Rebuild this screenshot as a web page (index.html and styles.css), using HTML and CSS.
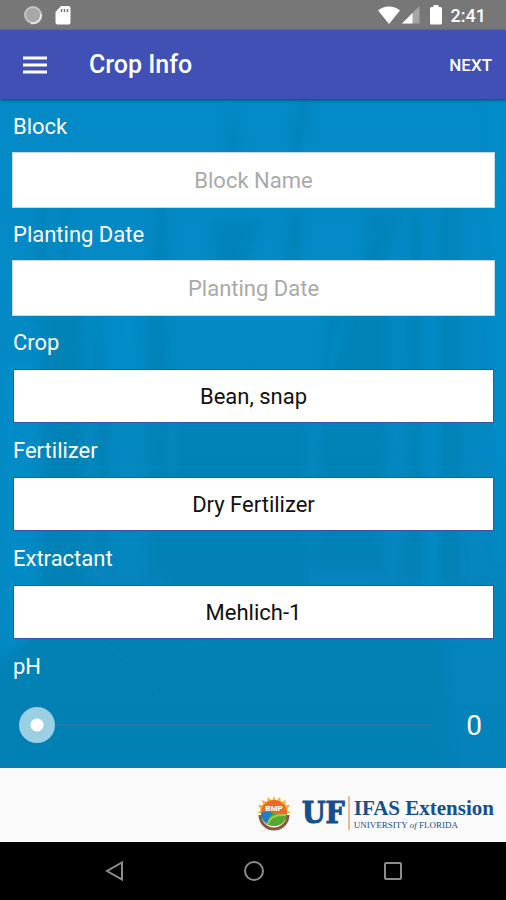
FILE: index.html
```html
<!DOCTYPE html>
<html lang="en">
<head>
    <meta charset="UTF-8">
    <meta name="viewport" content="width=device-width, initial-scale=1.0">
    <title>Crop Info</title>
    <link rel="stylesheet" href="styles.css">
</head>
<body>
    <div class="status-bar">
        <div class="status-left">
            <svg width="20" height="20" viewBox="0 0 20 20">
                <circle cx="10" cy="10" r="8" fill="#a8a8a8" stroke="#c4c4c4" stroke-width="2"/>
                <path d="M18 9a8 8 0 0 1-10 9" fill="none" stroke="#e4e4e4" stroke-width="2"/>
            </svg>
            <svg width="16" height="20" viewBox="0 0 16 20">
                <path d="M6 1h7.500a2 2 0 0 1 2 2v14.500a2 2 0 0 1-2 2h-11a2 2 0 0 1-2-2V7z" fill="#fff"/>
                <path d="M6.500 4v3M9.500 4v3M12.500 4v3" stroke="#777" stroke-width="1.500"/>
            </svg>
        </div>
        <div class="status-right">
            <svg width="22" height="18" viewBox="0 0 22 18">
                <path d="M0 4.500C6-1 16-1 22 4.500L11 18z" fill="#fff"/>
            </svg>
            <svg width="18" height="18" viewBox="0 0 18 18">
                <path d="M17.500 0v17.500H0z" fill="#a6a6a6"/>
                <path d="M10.500 7v10.500H0z" fill="#fff"/>
            </svg>
            <svg class="battery" width="12" height="20" viewBox="0 0 12 20">
                <path d="M3.500 0h5v2H10.500a1.500 1.500 0 0 1 1.500 1.500v14.500a1.500 1.500 0 0 1-1.500 1.500h-9A1.500 1.500 0 0 1 0 18V3.500A1.500 1.500 0 0 1 1.500 2h2z" fill="#fff"/>
            </svg>
            <span class="time">2:41</span>
        </div>
    </div>

    <header class="toolbar">
        <button type="button" class="menu-button" aria-label="Menu">
            <svg width="24" height="18" viewBox="0 0 24 18">
                <path d="M0 2h24M0 9h24M0 16h24" stroke="#fff" stroke-width="3"/>
            </svg>
        </button>
        <h1>Crop Info</h1>
        <button type="button" class="next-button">NEXT</button>
    </header>

    <main>
        <!-- faint plant texture behind the form -->
        <svg class="backdrop" viewBox="0 0 506 668" preserveAspectRatio="none" aria-hidden="true">
            <defs>
                <filter id="soft"><feGaussianBlur stdDeviation="4"/></filter>
            </defs>
            <g filter="url(#soft)" fill="#067fae" opacity=".5">
                <path d="M232 0l12 60h-18zM298 0h14l-14 70h-12zM36 60h12v160h-14zM60 100h10v150h-10z"/>
                <path d="M155 100l14-8-4 140h-14zM212 120h50l-20 50h-24zM366 110h38l-20 60h-22z"/>
                <path d="M42 180h40l8 380h-50zM98 170h12v300h-16zM148 180h18l6 300h-24z"/>
                <path d="M290 110h14l-6 60h-14zM330 170h62l-10 300h-70zM410 110h12v370h-16zM440 100h20v380h-20z"/>
                <path d="M180 280h130v260h-150zM0 570l60-60h380l10 160H0z"/>
            </g>
            <g filter="url(#soft)" fill="#0590cd" opacity=".5">
                <path d="M100 180l30-10 14 130h-40zM328 260l18-60 8 0-22 80zM428 170h8v340h-8zM444 510l8-4 12 30-8 6z"/>
                <path d="M0 260h38v270l-38 30zM488 0h18v460h-10z"/>
            </g>
            <path d="M80 530q60 30 80 70M170 550q120-20 210-50" fill="none" stroke="#2a95c6" opacity=".2"/>
        </svg>
        <form class="crop-form">
            <div class="field">
                <label for="blockName">Block</label>
                <input type="text" id="blockName" name="blockName" placeholder="Block Name">
            </div>
            <div class="field">
                <label for="plantingDate">Planting Date</label>
                <input type="text" id="plantingDate" name="plantingDate" placeholder="Planting Date">
            </div>
            <div class="field">
                <label for="crop">Crop</label>
                <select id="crop" name="crop">
                    <option>Bean, snap</option>
                </select>
            </div>
            <div class="field">
                <label for="fertilizer">Fertilizer</label>
                <select id="fertilizer" name="fertilizer">
                    <option>Dry Fertilizer</option>
                </select>
            </div>
            <div class="field">
                <label for="extractant">Extractant</label>
                <select id="extractant" name="extractant">
                    <option>Mehlich-1</option>
                </select>
            </div>
            <div class="field">
                <label for="ph">pH</label>
                <div class="slider-row">
                    <input type="range" id="ph" name="ph" min="0" max="14" value="0">
                    <output for="ph">0</output>
                </div>
            </div>
        </form>
    </main>

    <footer>
        <svg class="bmp-logo" width="36" height="36" viewBox="0 0 36 36">
            <path d="M18 1l2 5 4-4 1 5 5-2-1 5 5 0-3 5 4 3H1l4-3-3-5 5 0-1-5 5 2 1-5 4 4z" fill="#f9b233"/>
            <circle cx="18" cy="18" r="13" fill="#ee6a24"/>
            <path d="M5 18q7-4 13 0t13 0a13 13 0 0 1-26 0z" fill="#54a934"/>
            <path d="M5 18q8-4 12 1-6 3-3 11A13 13 0 0 1 5 18z" fill="#2080c4"/>
            <path d="M12 29q2-10 18-9" fill="none" stroke="#9bcf4a" stroke-width="2"/>
            <path d="M4 20a14 14 0 0 0 28 0" fill="none" stroke="#8b5a3c" stroke-width="3"/>
            <text x="18" y="16" class="bmp-text">BMP</text>
        </svg>
        <span class="uf">UF</span>
        <div class="ifas">
            <span class="ifas-name">IFAS Extension</span>
            <span class="ifas-sub">UNIVERSITY <i>of</i> FLORIDA</span>
        </div>
    </footer>

    <nav class="nav-bar">
        <button type="button" aria-label="Back">
            <svg width="20" height="20" viewBox="0 0 20 20">
                <path d="M17 1.500v17L2 10z"/>
            </svg>
        </button>
        <button type="button" aria-label="Home">
            <svg width="20" height="20" viewBox="0 0 20 20">
                <circle cx="10" cy="10" r="9"/>
            </svg>
        </button>
        <button type="button" aria-label="Recent apps">
            <svg width="20" height="20" viewBox="0 0 20 20">
                <rect x="2" y="2" width="16" height="16" rx="1"/>
            </svg>
        </button>
    </nav>

    <script>
        const ph = document.getElementById('ph');
        ph.addEventListener('input', () => {
            document.querySelector('output').value = ph.value;
        });
    </script>
</body>
</html>
```
FILE: styles.css
```css
* {
    box-sizing: border-box;
}
body {
    font-family: Roboto, "Liberation Sans", sans-serif;
    margin: 0;
    min-height: 100vh;
    display: flex;
    flex-direction: column;
    background-color: #fafafa;
}
button {
    border: none;
    padding: 0;
    background: none;
    color: white;
    font-family: inherit;
    cursor: pointer;
}
svg {
    display: block;
}

.status-bar {
    height: 30px;
    padding: 0 20px 0 23px;
    display: flex;
    justify-content: space-between;
    align-items: center;
    background-color: #777;
    color: white;
}
.status-left,
.status-right {
    display: flex;
    align-items: center;
}
.status-left {
    gap: 12px;
}
.status-right {
    gap: 2px;
}
.battery {
    margin: 0 7px 0 8px;
}
.time {
    font-size: 18px;
    font-weight: 500;
}

.toolbar {
    position: relative;
    z-index: 1;
    height: 69px;
    padding: 0 14px 0 23px;
    display: flex;
    align-items: center;
    background-color: #4050b5;
    box-shadow: 0 1px 3px rgba(0, 0, 0, 0.5);
}
.toolbar h1 {
    flex: 1;
    margin: 0 0 0 42px;
    color: white;
    font-size: 25px;
    font-weight: 500;
    line-height: 32px;
}
.next-button {
    font-size: 17px;
    font-weight: 500;
}

main {
    position: relative;
    flex: 1;
    background: linear-gradient(#038bc8, #0488c2 50%, #0482b9);
}
.backdrop {
    position: absolute;
    inset: 0;
    width: 100%;
    height: 100%;
}
.crop-form {
    position: relative;
    padding: 14px 11px 8px 12px;
    display: flex;
    flex-direction: column;
    gap: 13px;
}
.field {
    display: flex;
    flex-direction: column;
    gap: 11px;
}
.field label {
    padding-left: 1px;
    color: white;
    font-size: 22px;
    line-height: 28px;
}
input[type="text"],
select {
    height: 56px;
    padding: 0 12px;
    border: 1px solid #c9d5ee;
    border-radius: 0;
    background-color: white;
    color: #111;
    font-family: inherit;
    font-size: 22px;
    text-align: center;
}
input::placeholder {
    color: #aaa;
    opacity: 1;
}
select {
    appearance: none;
    height: 54px;
    margin: 1px;
    border-color: #3c50b0;
    text-align-last: center;
}

.slider-row {
    height: 66px;
    padding: 0 13px 0 7px;
    display: flex;
    align-items: center;
    justify-content: space-between;
    gap: 16px;
}
input[type="range"] {
    appearance: none;
    flex: 1;
    height: 36px;
    margin: 0;
    background: linear-gradient(#2479a4, #2479a4) center / calc(100% - 36px) 2px no-repeat;
}
input[type="range"]::-webkit-slider-thumb {
    appearance: none;
    width: 36px;
    height: 36px;
    border-radius: 50%;
    background: radial-gradient(circle, #fff 6px, #9bcfe4 7px);
}
output {
    color: white;
    font-size: 28px;
}

footer {
    height: 74px;
    padding: 16px 12px 0;
    display: flex;
    align-items: center;
    justify-content: flex-end;
    background-color: #fafafa;
    color: #14508f;
}
.bmp-logo {
    margin-right: 10px;
}
.bmp-text {
    fill: white;
    font-size: 8px;
    font-weight: 900;
    text-anchor: middle;
}
.uf {
    font-family: "DejaVu Serif Condensed", "DejaVu Serif", serif;
    font-size: 30px;
    font-weight: bold;
    line-height: 30px;
    -webkit-text-stroke: 1px #14508f;
}
.ifas {
    margin-left: 3px;
    padding-left: 4px;
    display: flex;
    flex-direction: column;
    border-left: 2px solid #f0b898;
    font-family: "Liberation Serif", serif;
}
.ifas-name {
    font-size: 21px;
    font-weight: bold;
    line-height: 24px;
}
.ifas-sub {
    font-size: 9px;
    line-height: 10px;
}

.nav-bar {
    height: 58px;
    padding: 0 43px 0 45px;
    display: flex;
    align-items: center;
    background-color: black;
}
.nav-bar button {
    flex: 1;
    display: flex;
    justify-content: center;
}
.nav-bar svg {
    fill: none;
    stroke: #8c8c8c;
    stroke-width: 2;
}
```
